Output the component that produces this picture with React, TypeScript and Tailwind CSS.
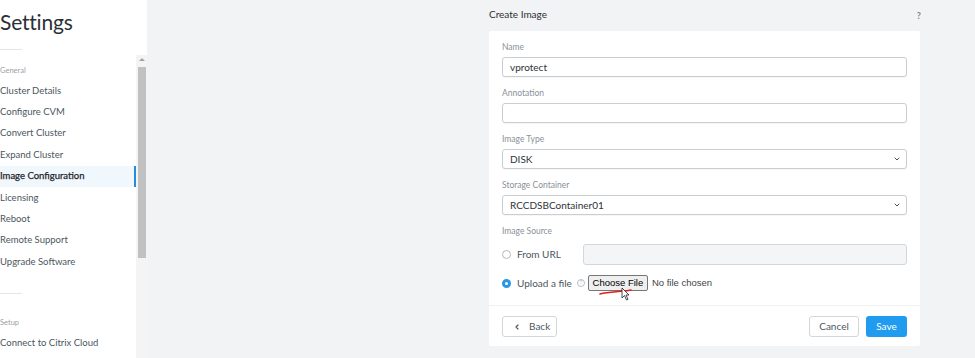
import { ChevronDown, ChevronLeft } from "lucide-react";

// sidebar ki list
const generalItems = [
  "Cluster Details",
  "Configure CVM",
  "Convert Cluster",
  "Expand Cluster",
  "Image Configuration",
  "Licensing",
  "Reboot",
  "Remote Support",
  "Upgrade Software",
];

function Field({ label, children }: { label: string; children: React.ReactNode }) {
  return (
    <div className="pb-[10px]">
      <div className="h-[12px] leading-[12px] text-[8.5px] text-[#8a9199]">{label}</div>
      <div className="mt-[4px]">{children}</div>
    </div>
  );
}

function TextBox({ value }: { value?: string }) {
  return (
    <div className="h-[20px] rounded-[3px] border border-[#c9ced3] bg-white px-[7px] text-[10px] leading-[18px] text-[#2f3337] shadow-[0_1px_1px_rgba(0,0,0,0.04)]">
      {value}
    </div>
  );
}

function SelectBox({ value }: { value: string }) {
  return (
    <div className="flex h-[20px] items-center justify-between rounded-[3px] border border-[#c9ced3] bg-white pl-[7px] pr-[5px] text-[10px] text-[#2f3337] shadow-[0_1px_1px_rgba(0,0,0,0.04)]">
      <span>{value}</span>
      <ChevronDown className="h-[8px] w-[8px] text-[#4a4f55]" strokeWidth={3} />
    </div>
  );
}

export default function App() {
  return (
    <div className="flex h-[358px] w-[975px] overflow-hidden bg-[#f2f3f4] font-['Lato',sans-serif]">
      {/* left settings menu */}
      <div className="flex w-[147px] shrink-0 flex-col bg-white">
        <div className="h-[55px] shrink-0">
          <div className="pt-[7px] text-[21px] leading-[30px] tracking-[-0.2px] text-[#2b3036]">Settings</div>
          <div className="mt-[12px] h-px w-[22px] bg-[#e3e6e9]" />
        </div>
        <div className="flex flex-1">
          <div className="flex-1">
            <div className="mt-[10px] h-[12px] text-[7.5px] leading-[12px] text-[#9aa1a8]">General</div>
            <div className="mt-[3px]">
              {generalItems.map((item) => {
                const active = item === "Image Configuration";
                return (
                  <div
                    key={item}
                    className={
                      active
                        ? "flex h-[21.4px] items-center border-r-2 border-[#2a8ad8] bg-[#f1f8fd] text-[9.5px] text-[#1f252b] [-webkit-text-stroke:0.25px_#1f252b]"
                        : "flex h-[21.4px] items-center text-[9.5px] text-[#4c5660]"
                    }
                  >
                    {item}
                  </div>
                );
              })}
            </div>
            <div className="mt-[20px] h-px w-[22px] bg-[#e3e6e9]" />
            <div className="mt-[23px] h-[12px] text-[7.5px] leading-[12px] text-[#9aa1a8]">Setup</div>
            <div className="mt-[4px] flex h-[21px] items-center text-[9.5px] text-[#4c5660]">
              Connect to Citrix Cloud
            </div>
          </div>
          {/* scrollbar */}
          <div className="flex w-[11px] shrink-0 flex-col items-center bg-[#f4f4f4]">
            <div className="mt-[3px] h-0 w-0 border-x-[3px] border-b-[3px] border-x-transparent border-b-[#a3a3a3]" />
            <div className="mt-[6px] h-[191px] w-[8px] bg-[#c1c1c1]" />
          </div>
        </div>
      </div>

      {/* main area */}
      <div className="flex-1">
        <div className="ml-[342px] w-[431px]">
          <div className="flex h-[31px] items-start justify-between pt-[7px]">
            <span className="text-[10px] leading-[14px] text-[#2b3036]">Create Image</span>
            <span className="-mr-[1px] pt-[2px] text-[9px] font-bold leading-[14px] text-[#7d848b]">?</span>
          </div>
          <div className="rounded-[2px] bg-white">
            <div className="px-[13px] pt-[10px]">
              <Field label="Name">
                <TextBox value="vprotect" />
              </Field>
              <Field label="Annotation">
                <TextBox />
              </Field>
              <Field label="Image Type">
                <SelectBox value="DISK" />
              </Field>
              <Field label="Storage Container">
                <SelectBox value="RCCDSBContainer01" />
              </Field>
              <div className="h-[12px] text-[8.5px] leading-[12px] text-[#8a9199]">Image Source</div>
              <div className="mt-[7px] flex h-[21px] items-center">
                <div className="h-[9px] w-[9px] rounded-full border border-[#b3b9bf] bg-white" />
                <span className="ml-[6px] w-[66px] text-[10px] text-[#4c5660]">From URL</span>
                <div className="h-[21px] flex-1 rounded-[3px] border border-[#d3d7db] bg-[#f4f5f6]" />
              </div>
              <div className="mt-[10px] flex h-[16px] items-center">
                <div className="flex h-[9px] w-[9px] items-center justify-center rounded-full bg-[#2a96e6]">
                  <div className="h-[3px] w-[3px] rounded-full bg-white" />
                </div>
                <span className="ml-[6px] text-[10px] text-[#4c5660]">Upload a file</span>
                <span className="ml-[5px] flex h-[8px] w-[8px] items-center justify-center rounded-full border border-[#b8bec4] text-[5px] font-bold text-[#b8bec4]">
                  ?
                </span>
                <div className="relative ml-[3px] flex items-center">
                  <div className="flex h-[16px] w-[60px] items-center justify-center rounded-[2px] border border-[#767676] bg-[#efefef] font-['Liberation_Sans',sans-serif] text-[9.5px] text-black">
                    Choose File
                  </div>
                  <span className="ml-[4px] font-['Liberation_Sans',sans-serif] text-[9.5px] text-[#444]">
                    No file chosen
                  </span>
                  {/* red underline scribble + mouse cursor */}
                  <svg className="absolute left-[10px] top-[12px]" width="36" height="14" viewBox="0 0 36 14">
                    <path d="M2 7 C 10 5, 18 5, 26 4 C 29 4, 31 3, 33 3" stroke="#e0201b" strokeWidth="1.6" fill="none" strokeLinecap="round" />
                    <path d="M24 1 L24 11 L26.5 8.5 L28.5 13 L30 12.3 L28 8 L31 8 Z" fill="#fff" stroke="#222" strokeWidth="0.8" />
                  </svg>
                </div>
              </div>
              <div className="h-[14px]" />
            </div>
            <div className="flex items-center justify-between border-t border-[#eef0f2] px-[13px] pb-[9px] pt-[10px]">
              <div className="flex h-[21px] w-[55px] items-center rounded-[3px] border border-[#d3d7db] bg-white pl-[10px] text-[10px] text-[#4c5660]">
                <ChevronLeft className="h-[8px] w-[8px]" strokeWidth={3.5} />
                <span className="ml-[8px]">Back</span>
              </div>
              <div className="flex gap-[7px]">
                <div className="flex h-[21px] w-[50px] items-center justify-center rounded-[3px] border border-[#d3d7db] bg-white text-[10px] text-[#4c5660]">
                  Cancel
                </div>
                <div className="flex h-[21px] w-[41px] items-center justify-center rounded-[3px] bg-[#1f9cf0] text-[10px] text-white">
                  Save
                </div>
              </div>
            </div>
          </div>
        </div>
      </div>
    </div>
  );
}
